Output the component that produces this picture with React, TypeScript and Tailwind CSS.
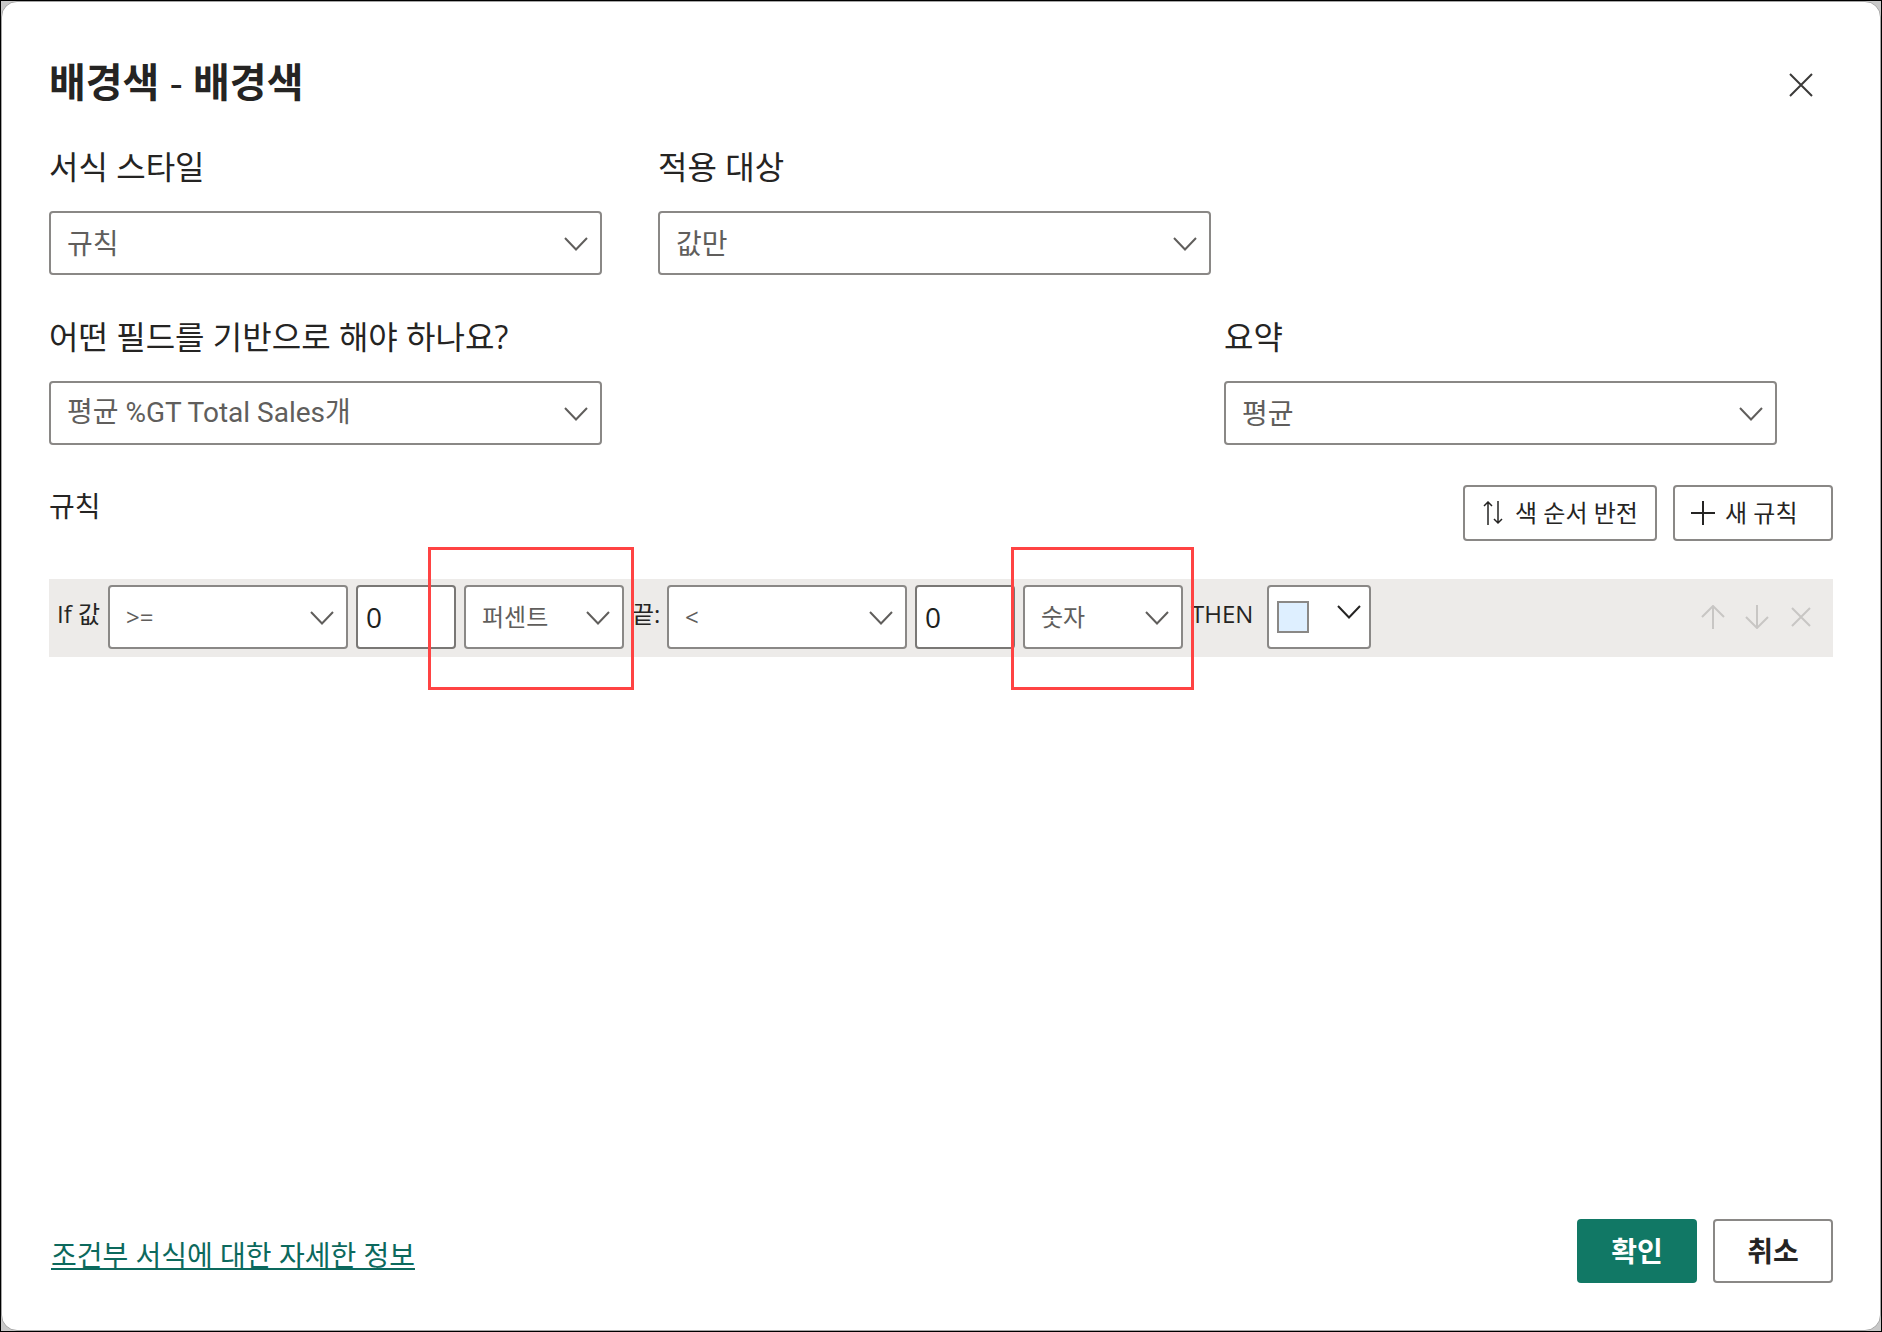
import React, { useId } from "react";

function Chevron({ className }: { className: string }) {
  return (
    <svg viewBox="0 0 24 14" fill="none" stroke="currentColor" strokeWidth="2" className={className} aria-hidden="true">
      <path d="M1 1l11 11.500L23 1" />
    </svg>
  );
}

function Select({ id, label, value, text }: { id?: string; label?: string; value: string; text: string }) {
  return (
    <div className="relative h-16 w-full">
      <select
        id={id}
        aria-label={label}
        defaultValue={value}
        className={`h-full w-full appearance-none rounded border-2 border-[#8a8886] bg-white pr-14 pl-4 text-[#605e5c] outline-none ${text}`}
      >
        <option value={value}>{value}</option>
      </select>
      <Chevron className="pointer-events-none absolute top-[26px] right-3.5 h-3.5 w-6 text-[#605e5c]" />
    </div>
  );
}

function Field({
  label,
  value,
  className,
  text = "text-[28px]",
}: {
  label: string;
  value: string;
  className: string;
  text?: string;
}) {
  const id = useId();
  return (
    <div className={`flex flex-col gap-6 ${className}`}>
      <label htmlFor={id} className="text-[32px] leading-10 whitespace-nowrap">
        {label}
      </label>
      <Select id={id} value={value} text={text} />
    </div>
  );
}

function NumberBox({ label }: { label: string }) {
  return (
    <input
      type="text"
      aria-label={label}
      defaultValue="0"
      className="h-16 w-[100px] rounded border-2 border-[#797775] bg-white px-2 text-[28px] text-[#201f1e] outline-none"
    />
  );
}

export default function App() {
  return (
    <div className="flex min-h-screen flex-col border border-black bg-[#c8c8c8] font-['Open_Sans','Noto_Sans_CJK_KR',sans-serif] text-[#252423]">
      <main
        role="dialog"
        aria-labelledby="dialog-title"
        className="flex flex-1 flex-col rounded-2xl border border-[#a6a6a6] bg-white px-[47px] pt-12 pb-[47px]"
      >
        <header className="flex items-center justify-between pr-5">
          <h1 id="dialog-title" className="text-[40px] leading-[64px] font-bold">
            배경색 <span className="font-medium">-</span> 배경색
          </h1>
          <button type="button" aria-label="닫기" className="pt-1.5 text-[#3b3a39]">
            <svg viewBox="0 0 24 24" fill="none" stroke="currentColor" strokeWidth="2" className="size-6">
              <path d="M1 1l22 22M23 1L1 23" />
            </svg>
          </button>
        </header>

        <div className="mt-[33px] flex gap-14">
          <Field label="서식 스타일" value="규칙" className="w-[31%]" />
          <Field label="적용 대상" value="값만" className="w-[31%]" />
        </div>

        <div className="mt-[42px] flex justify-between">
          <Field
            label="어떤 필드를 기반으로 해야 하나요?"
            value="평균 %GT Total Sales개"
            className="w-[31%]"
            text="font-['Roboto','Noto_Sans_CJK_KR',sans-serif] text-[28px]"
          />
          <Field label="요약" value="평균" className="mr-14 w-[31%]" />
        </div>

        <section className="mt-10">
          <div className="flex items-start justify-between">
            <h2 className="text-[28px] leading-[42px]">규칙</h2>
            <div className="flex gap-4 text-2xl">
              <button type="button" className="flex h-14 w-[194px] items-center gap-3 rounded border-2 border-[#8a8886] pl-[18px] whitespace-nowrap">
                <svg viewBox="0 0 20 24" fill="none" stroke="currentColor" strokeWidth="1.500" className="h-6 w-5">
                  <path d="M5 24V1M1 5l4-4 4 4M15 0v22M11 18l4 4 4-4" />
                </svg>
                색 순서 반전
              </button>
              <button type="button" className="flex h-14 w-40 items-center gap-2.5 rounded border-2 border-[#8a8886] pl-4 whitespace-nowrap">
                <svg viewBox="0 0 24 24" fill="none" stroke="currentColor" strokeWidth="2" className="size-6">
                  <path d="M12 0v24M0 12h24" />
                </svg>
                새 규칙
              </button>
            </div>
          </div>

          <div className="mt-[38px] flex h-[78px] items-start bg-[#edebe9] pt-1.5 pr-5 text-2xl">
            <span className="w-[59px] pl-2 leading-[58px] whitespace-nowrap">If 값</span>
            <div className="w-60">
              <Select label="시작 연산자" value=">=" text="text-2xl" />
            </div>
            <div className="ml-2">
              <NumberBox label="시작 값" />
            </div>
            <div className="relative ml-2 w-40">
              <Select label="시작 단위" value="퍼센트" text="text-2xl" />
              <div className="pointer-events-none absolute -top-[38px] -right-2.5 -bottom-[41px] -left-9 border-3 border-[#ff4343]" />
            </div>
            <span className="w-[43px] pl-2 leading-[58px] whitespace-nowrap">끝:</span>
            <div className="w-60">
              <Select label="끝 연산자" value="<" text="text-2xl" />
            </div>
            <div className="ml-2">
              <NumberBox label="끝 값" />
            </div>
            <div className="relative ml-2 w-40">
              <Select label="끝 단위" value="숫자" text="text-2xl" />
              <div className="pointer-events-none absolute -top-[38px] -right-[11px] -bottom-[41px] -left-3 border-3 border-[#ff4343]" />
            </div>
            <span className="w-[84px] pl-2 leading-[58px]">THEN</span>
            <button
              type="button"
              aria-label="색 선택"
              className="flex h-16 w-[104px] items-start justify-between rounded border-2 border-[#8a8886] bg-white pr-2 pl-2"
            >
              <span className="mt-3.5 size-8 border-2 border-[#8a8886] bg-[#deefff]" />
              <Chevron className="mt-[18px] h-3.5 w-6 text-[#252423]" />
            </button>
            <div className="ml-auto flex h-16 items-center gap-5 text-[#c8c6c4]">
              <button type="button" aria-label="위로 이동">
                <svg viewBox="0 0 24 24" fill="none" stroke="currentColor" strokeWidth="2" className="size-6">
                  <path d="M12 24V1M1 12L12 1l11 11" />
                </svg>
              </button>
              <button type="button" aria-label="아래로 이동">
                <svg viewBox="0 0 24 24" fill="none" stroke="currentColor" strokeWidth="2" className="size-6">
                  <path d="M12 0v23M1 12l11 11 11-11" />
                </svg>
              </button>
              <button type="button" aria-label="규칙 삭제">
                <svg viewBox="0 0 24 24" fill="none" stroke="currentColor" strokeWidth="2" className="size-6">
                  <path d="M3 3l18 18M21 3L3 21" />
                </svg>
              </button>
            </div>
          </div>
        </section>

        <footer className="mt-auto flex items-center justify-between pl-0.5">
          <a href="#" className="pt-2 text-[28px] text-[#0c695d] underline decoration-2 underline-offset-2">
            조건부 서식에 대한 자세한 정보
          </a>
          <div className="flex gap-4 text-[28px] font-bold">
            <button type="button" className="h-16 w-30 rounded bg-[#117865] text-white">
              확인
            </button>
            <button type="button" className="h-16 w-30 rounded border-2 border-[#8a8886] bg-white">
              취소
            </button>
          </div>
        </footer>
      </main>
    </div>
  );
}
